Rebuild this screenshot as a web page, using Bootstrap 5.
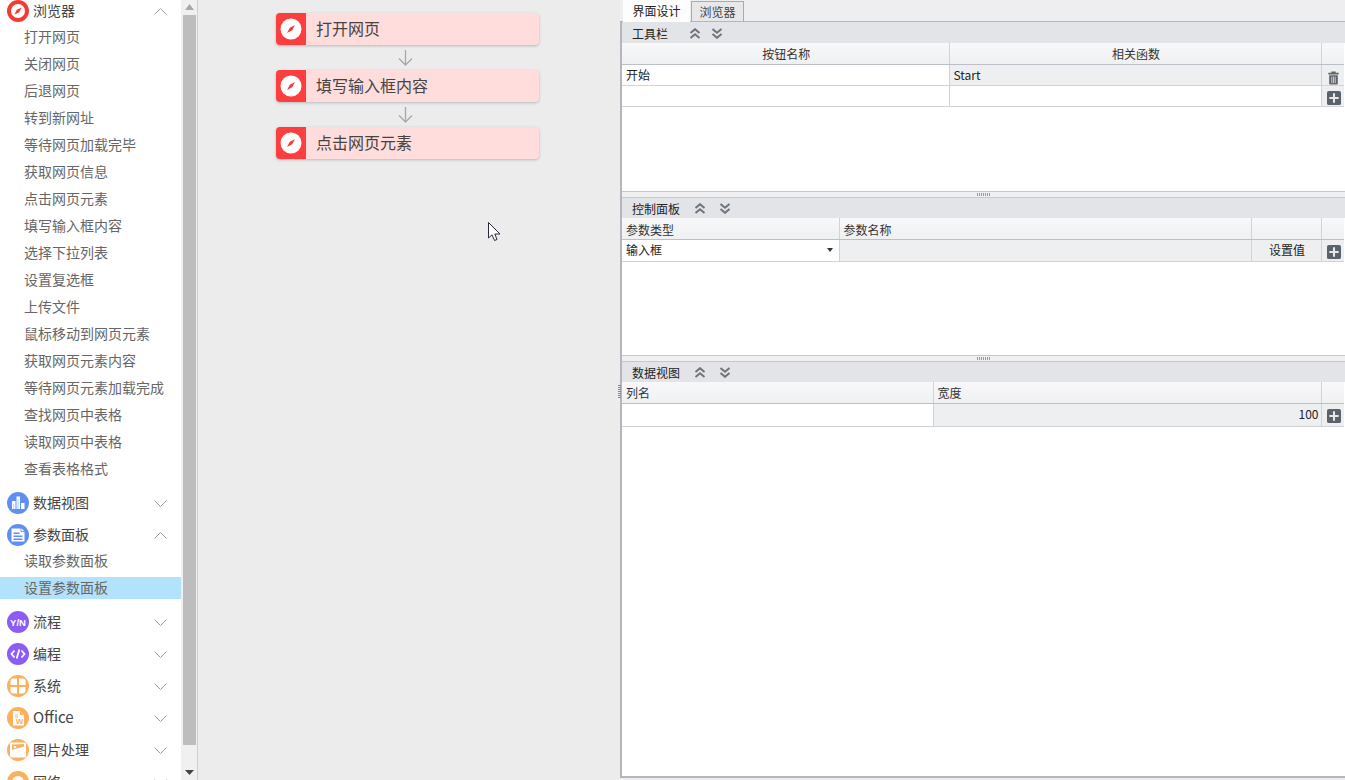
<!DOCTYPE html>
<html lang="zh">
<head>
<meta charset="utf-8">
<link rel="stylesheet" href="https://cdn.jsdelivr.net/npm/bootstrap@5.3.0/dist/css/bootstrap.min.css">
<style>
html,body{height:780px;overflow:hidden;background:#ececec;font-family:"Noto Sans CJK SC","Liberation Sans",sans-serif;}
.app-root{height:780px;width:1345px;position:relative;}
.side{width:181px;height:780px;overflow:hidden;background:#fff;flex:none;}
.side-inner{margin-top:-4px;}
.g-head{height:30px;margin-bottom:2px;padding-left:7px;padding-right:14px;color:#444;font-size:14px;line-height:26px;}
.g-head.open{margin-bottom:0;}
.g-head svg.gi{width:22px;height:22px;margin-right:4px;flex:none;}
.g-head .gt{flex:1;margin-bottom:2px;}
.g-head .gt-en{font-size:15px;}
.g-list{margin:0 0 8px;padding:0;list-style:none;}
.g-list li{height:22px;line-height:20px;margin-bottom:5px;padding-left:24px;font-size:14px;color:#666;}
.g-list li:last-child{margin-bottom:0;}
.g-list li.sel{background:#b3e2fd;}
.sbar{width:17px;height:780px;background:#f0f0f0;border-right:1px solid #d0d0d0;flex:none;padding:15px 1px 35px 2px;position:relative;}
.sthumb{height:730px;background:#bdbdbd;}
.sarr{position:absolute;left:4px;}
.sarr.up{top:4px;}
.sarr.dn{top:770px;}
.canvas{width:422px;height:780px;flex:none;background:#ececec;padding-top:13px;padding-left:78px;position:relative;}
.node{width:263px;height:32px;background:#ffdddc;border-radius:4px;box-shadow:0 1px 3px rgba(0,0,0,.22);overflow:hidden;color:#444;font-size:16px;line-height:30px;}
.node-ic{width:30px;height:32px;background:#fb3f3f;margin-right:10px;flex:none;}
.link-arrow{height:25px;width:263px;padding-right:5px;}
.cursor-pic{position:absolute;left:488px;top:222px;}
.rpanel{width:725px;height:780px;flex:none;background:#eeeef0;position:relative;}
.tabs{height:21px;padding-left:3px;gap:1px;font-size:12px;color:#222;}
.tab-a{width:67px;height:22px;line-height:21px;background:#fdfdfd;text-align:center;position:relative;z-index:2;}
.tab-b{width:53px;height:21px;margin-top:1px;line-height:20px;background:#e8e8ea;border:1px solid #a8aab2;text-align:center;color:#444;}
.pane{height:757px;border:2px solid #b4b6bc;border-right:0;border-top-width:1px;background:#fff;margin-bottom:2px;font-size:12px;color:#222;position:relative;}
.sec-head{background:#e3e4e8;padding-left:10px;padding-top:1px;line-height:19px;}
.sec-head .st{width:36px;}
.sec-a{height:169px;}
.sec-b{height:157px;}
.sec-c{flex:1;}
.sec-a .sec-head{height:21px;}
.sec-b .sec-head,.sec-c .sec-head{height:20px;}
.split{height:7px;background:#f0f0f2;border-top:1px solid #c6c8ce;border-bottom:1px solid #c6c8ce;}
.dots{width:14px;height:3px;background-image:repeating-linear-gradient(90deg,#999 0 1px,transparent 1px 2px);}
.sa1{margin-left:21px;}.sa2{margin-left:10px;}
.sb1{margin-left:26px;}.sb2{margin-left:13px;}
.gridt{table-layout:fixed;width:722px;margin:0;border-collapse:collapse;font-size:12px;}
.gridt th,.gridt td{padding:0 2px 0 4px;height:21px;line-height:20px;font-weight:400;border-right:1px solid #d2d3d8;border-bottom:1px solid #d2d3d8;color:#222;background:#fff;box-shadow:none;overflow:hidden;white-space:nowrap;}
.gridt th{height:21px;background:linear-gradient(#f8f8fa,#eff0f2);border-bottom:1px solid #bcbec8;color:#333;}
.gridt th:last-child,.gridt td:last-child{border-right:0;}
.gridt .gy{background:#eeeff1;}
.gridt .act{padding:0;background:#eeeff1;vertical-align:top;}
.gridt .act svg{display:block;margin:5px 0 0 5px;}
.gridt th.ctr{text-align:center;}
.sec-b .gridt th{padding-top:2px;line-height:18px;}
.sec-b .gridt td{height:22px;}
.sec-c .gridt td{height:23px;}
.sec-a .c1{width:327px;}.sec-a .c2{width:372px;}
.sec-b .c1{width:217px;}.sec-b .c2{width:412px;}.sec-b .c3{width:70px;}
.sec-c .c1{width:311px;}.sec-c .c2{width:388px;}
.c4{width:23px;}
.val-btn{text-align:center;}
.drop-mark{width:0;height:0;border-left:3.5px solid transparent;border-right:3.5px solid transparent;border-top:4px solid #333;}
.vgrip{position:absolute;left:618px;top:384px;width:3px;height:14px;background-image:repeating-linear-gradient(0deg,#888 0 1px,transparent 1px 2px);z-index:3;}
</style>
</head>
<body>
<svg width="0" height="0" class="position-absolute">
<defs>
<symbol id="ch-d" viewBox="0 0 13 7"><path d="M.5.5 6.500 6.500 12.500.5" fill="none" stroke="#95a0a8" stroke-width="1"/></symbol>
<symbol id="ch-u" viewBox="0 0 13 7"><path d="M.5 6.500 6.500.5 12.500 6.500" fill="none" stroke="#95a0a8" stroke-width="1"/></symbol>
<symbol id="dbl-u" viewBox="0 0 12 11"><path d="M1.500 5 6 1.200 10.500 5M1.500 10 6 6.200 10.500 10" fill="none" stroke="#70747a" stroke-width="2"/></symbol>
<symbol id="dbl-d" viewBox="0 0 12 11"><path d="M1.500 1 6 4.800 10.500 1M1.500 6 6 9.800 10.500 6" fill="none" stroke="#70747a" stroke-width="2"/></symbol>
<symbol id="plus" viewBox="0 0 15 15"><rect width="15" height="15" rx="2" fill="#5a626b"/><path d="M7.500 2.500v10M2.500 7.500h10" stroke="#e8e8e8" stroke-width="2.200"/></symbol>
</defs>
</svg>
<div class="app-root d-flex">
  <div class="side">
    <div class="side-inner">
      <div class="g-head open d-flex align-items-center">
        <svg class="gi" viewBox="0 0 22 22"><circle cx="11" cy="11" r="11" fill="#f33b36"/><circle cx="11" cy="11" r="7" fill="#fff"/><path d="M14.500 7.500 12.200 12.200 7.500 14.500 9.800 9.800Z" fill="#f33b36"/></svg>
        <span class="gt">浏览器</span><svg width="13" height="7"><use href="#ch-u"/></svg>
      </div>
      <ul class="g-list">
        <li>打开网页</li><li>关闭网页</li><li>后退网页</li><li>转到新网址</li><li>等待网页加载完毕</li><li>获取网页信息</li><li>点击网页元素</li><li>填写输入框内容</li><li>选择下拉列表</li><li>设置复选框</li><li>上传文件</li><li>鼠标移动到网页元素</li><li>获取网页元素内容</li><li>等待网页元素加载完成</li><li>查找网页中表格</li><li>读取网页中表格</li><li>查看表格格式</li>
      </ul>
      <div class="g-head d-flex align-items-center">
        <svg class="gi" viewBox="0 0 22 22"><circle cx="11" cy="11" r="11" fill="#5f8ff2"/><path d="M5 17V9h3.500v8zM9.500 17V4.500h3.500V17zM14 17v-6h3.500v6z" fill="#fff"/><path d="M10.500 17V7h1.200v10zM6 17v-5h1.200v5z" fill="#b5e0ff"/></svg>
        <span class="gt">数据视图</span><svg width="13" height="7"><use href="#ch-d"/></svg>
      </div>
      <div class="g-head open d-flex align-items-center">
        <svg class="gi" viewBox="0 0 22 22"><circle cx="11" cy="11" r="11" fill="#5f8ff2"/><path d="M4.500 4.500h9l4 4v9h-13z" fill="#fff"/><path d="M14 3.500v4h4z" fill="#fff" stroke="#5f8ff2" stroke-width=".8"/><path d="M6.500 8.500h6v1.500h-6zM6.500 11.500h9V13h-9zM6.500 14.500h9V16h-9z" fill="#5f8ff2"/></svg>
        <span class="gt">参数面板</span><svg width="13" height="7"><use href="#ch-u"/></svg>
      </div>
      <ul class="g-list">
        <li>读取参数面板</li><li class="sel">设置参数面板</li>
      </ul>
      <div class="g-head d-flex align-items-center">
        <svg class="gi" viewBox="0 0 22 22"><circle cx="11" cy="11" r="11" fill="#8c5cf5"/><text x="11" y="14.500" text-anchor="middle" font-family="Liberation Sans" font-weight="700" font-size="9.500" fill="#fff">Y/N</text></svg>
        <span class="gt">流程</span><svg width="13" height="7"><use href="#ch-d"/></svg>
      </div>
      <div class="g-head d-flex align-items-center">
        <svg class="gi" viewBox="0 0 22 22"><circle cx="11" cy="11" r="11" fill="#8c5cf5"/><path d="M7.500 7.500 4.500 11l3 3.500M14.500 7.500l3 3.500-3 3.500M12.300 6.500 9.700 15.500" fill="none" stroke="#fff" stroke-width="1.800"/></svg>
        <span class="gt">编程</span><svg width="13" height="7"><use href="#ch-d"/></svg>
      </div>
      <div class="g-head d-flex align-items-center">
        <svg class="gi" viewBox="0 0 22 22"><circle cx="11" cy="11" r="11" fill="#fbb05e"/><rect x="3.500" y="3.500" width="15" height="15" rx="3" fill="#fff"/><path d="M11 1v20M1 11h20" stroke="#fbb05e" stroke-width="2"/></svg>
        <span class="gt">系统</span><svg width="13" height="7"><use href="#ch-d"/></svg>
      </div>
      <div class="g-head d-flex align-items-center">
        <svg class="gi" viewBox="0 0 22 22"><circle cx="11" cy="11" r="11" fill="#fbb05e"/><path d="M6 4h7l4 4v10.500H6z" fill="#fff"/><path d="M13 4v4h4z" fill="#fbb05e"/><text x="12.500" y="16.500" text-anchor="middle" font-family="Liberation Sans" font-weight="700" font-size="8" fill="#fbb05e">W</text><path d="M8 8h3M8 10h3" stroke="#fbb05e"/></svg>
        <span class="gt gt-en">Office</span><svg width="13" height="7"><use href="#ch-d"/></svg>
      </div>
      <div class="g-head d-flex align-items-center">
        <svg class="gi" viewBox="0 0 22 22"><circle cx="11" cy="11" r="11" fill="#fbb05e"/><rect x="3" y="3.500" width="16" height="15" rx="1" fill="#fff"/><path d="M5 11V5.500L17 5 17 7.500Z" fill="#fbb05e"/><circle cx="8" cy="8" r="1.300" fill="#fff"/></svg>
        <span class="gt">图片处理</span><svg width="13" height="7"><use href="#ch-d"/></svg>
      </div>
      <div class="g-head d-flex align-items-center">
        <svg class="gi" viewBox="0 0 22 22"><circle cx="11" cy="11" r="11" fill="#fbb05e"/><circle cx="11" cy="11" r="6" fill="#fff"/></svg>
        <span class="gt">网络</span><svg width="13" height="7"><use href="#ch-d"/></svg>
      </div>
    </div>
  </div>
  <div class="sbar">
    <svg class="sarr up" width="9" height="6"><path d="M4.500 0 9 6H0z" fill="#a8a8a8"/></svg>
    <div class="sthumb"></div>
    <svg class="sarr dn" width="9" height="5"><path d="M0 0h9L4.500 5z" fill="#444"/></svg>
  </div>
  <div class="canvas">
    <div class="node d-flex">
      <div class="node-ic d-flex align-items-center justify-content-center"><svg width="22" height="22" viewBox="0 0 22 22"><circle cx="11" cy="11" r="10.500" fill="#fff"/><path d="M15 7 12.200 12.200 7 15 9.800 9.800Z" fill="#f33b36"/></svg></div>
      <span>打开网页</span>
    </div>
    <div class="link-arrow d-flex justify-content-center align-items-center"><svg width="15" height="17" viewBox="0 0 15 17"><path d="M7.500 1v15M1 9.500 7.500 16 14 9.500" fill="none" stroke="#a8a8a8" stroke-width="1.300"/></svg></div>
    <div class="node d-flex">
      <div class="node-ic d-flex align-items-center justify-content-center"><svg width="22" height="22" viewBox="0 0 22 22"><circle cx="11" cy="11" r="10.500" fill="#fff"/><path d="M15 7 12.200 12.200 7 15 9.800 9.800Z" fill="#f33b36"/></svg></div>
      <span>填写输入框内容</span>
    </div>
    <div class="link-arrow d-flex justify-content-center align-items-center"><svg width="15" height="17" viewBox="0 0 15 17"><path d="M7.500 1v15M1 9.500 7.500 16 14 9.500" fill="none" stroke="#a8a8a8" stroke-width="1.300"/></svg></div>
    <div class="node d-flex">
      <div class="node-ic d-flex align-items-center justify-content-center"><svg width="22" height="22" viewBox="0 0 22 22"><circle cx="11" cy="11" r="10.500" fill="#fff"/><path d="M15 7 12.200 12.200 7 15 9.800 9.800Z" fill="#f33b36"/></svg></div>
      <span>点击网页元素</span>
    </div>
  </div>
  <div class="rpanel">
    <div class="tabs d-flex">
      <div class="tab-a">界面设计</div>
      <div class="tab-b">浏览器</div>
    </div>
    <div class="pane d-flex flex-column">
      <div class="sec-a">
        <div class="sec-head d-flex align-items-center"><span class="st text-nowrap">工具栏</span><svg class="sa1" width="12" height="11"><use href="#dbl-u"/></svg><svg class="sa2" width="12" height="11"><use href="#dbl-d"/></svg></div>
        <table class="table gridt">
          <colgroup><col class="c1"><col class="c2"><col class="c4"></colgroup>
          <thead><tr><th class="ctr">按钮名称</th><th class="ctr">相关函数</th><th></th></tr></thead>
          <tbody>
            <tr><td>开始</td><td class="gy">Start</td><td class="act"><svg width="13" height="15" viewBox="0 0 15 17"><path d="M5 1.500h5V3h3.500v2h-12V3H5z" fill="#60666d"/><path d="M2.500 6h10v9.500a1 1 0 0 1-1 1h-8a1 1 0 0 1-1-1z" fill="#60666d"/><path d="M5.500 7.500v7.500M7.500 7.500v7.500M9.500 7.500v7.500" stroke="#d8d8d8"/></svg></td></tr>
            <tr><td></td><td></td><td class="act"><svg width="14" height="14"><use href="#plus"/></svg></td></tr>
          </tbody>
        </table>
      </div>
      <div class="split d-flex justify-content-center align-items-center"><div class="dots"></div></div>
      <div class="sec-b">
        <div class="sec-head d-flex align-items-center"><span class="st text-nowrap">控制面板</span><svg class="sb1" width="12" height="11"><use href="#dbl-u"/></svg><svg class="sb2" width="12" height="11"><use href="#dbl-d"/></svg></div>
        <table class="table gridt">
          <colgroup><col class="c1"><col class="c2"><col class="c3"><col class="c4"></colgroup>
          <thead><tr><th>参数类型</th><th>参数名称</th><th></th><th></th></tr></thead>
          <tbody>
            <tr><td><div class="d-flex justify-content-between align-items-center"><span>输入框</span><span class="drop-mark me-1"></span></div></td><td class="gy"></td><td class="gy val-btn">设置值</td><td class="act"><svg width="14" height="14"><use href="#plus"/></svg></td></tr>
          </tbody>
        </table>
      </div>
      <div class="split d-flex justify-content-center align-items-center"><div class="dots"></div></div>
      <div class="sec-c">
        <div class="sec-head d-flex align-items-center"><span class="st text-nowrap">数据视图</span><svg class="sb1" width="12" height="11"><use href="#dbl-u"/></svg><svg class="sb2" width="12" height="11"><use href="#dbl-d"/></svg></div>
        <table class="table gridt">
          <colgroup><col class="c1"><col class="c2"><col class="c4"></colgroup>
          <thead><tr><th>列名</th><th>宽度</th><th></th></tr></thead>
          <tbody>
            <tr><td></td><td class="gy text-end">100</td><td class="act"><svg width="14" height="14"><use href="#plus"/></svg></td></tr>
          </tbody>
        </table>
      </div>
    </div>
  </div>
  <div class="vgrip"></div>
  <svg class="cursor-pic" width="13" height="20" viewBox="0 0 13 20"><path d="M.5.5V16L4 12.800 6.500 18.500 9 17.500 6.800 12H12Z" fill="#fff" stroke="#2a2a3a"/></svg>
</div>
</body>
</html>
